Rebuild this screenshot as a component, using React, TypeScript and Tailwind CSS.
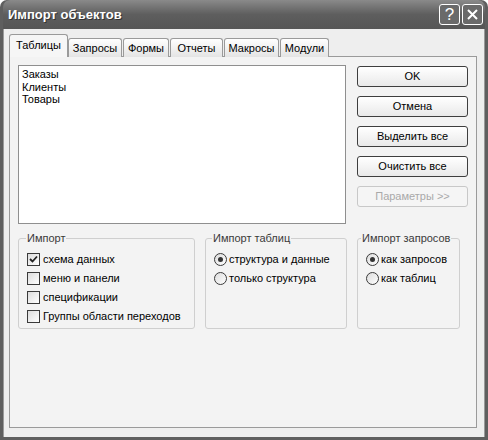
import React from "react";

const font = { fontFamily: '"Liberation Sans", Arial, sans-serif' };

function XpButton({ label, disabled }: { label: string; disabled?: boolean }) {
  return (
    <div
      className={`h-[21px] w-[111px] rounded-[3px] border flex items-center justify-center ${
        disabled
          ? "border-[#c8c8c8] bg-[#f5f5f5] text-[#a9a9a9]"
          : "border-[#3e3e3e] bg-gradient-to-b from-white to-[#e9e9e9] text-black"
      }`}
    >
      {label}
    </div>
  );
}

function Check({ label, checked }: { label: string; checked?: boolean }) {
  return (
    <div className="h-[19px] flex items-center gap-[3px] whitespace-nowrap">
      <div className="w-[13px] h-[13px] border border-[#3a3a3a] bg-gradient-to-br from-[#dcdcdc] to-white flex items-center justify-center">
        {checked && (
          <svg width="9" height="9" viewBox="0 0 9 9">
            <path d="M1 4 L3.5 6.5 L8 1.5" fill="none" stroke="#222" strokeWidth="1.8" />
          </svg>
        )}
      </div>
      <span>{label}</span>
    </div>
  );
}

function Radio({ label, checked }: { label: string; checked?: boolean }) {
  return (
    <div className="h-[19px] flex items-center gap-[2px] whitespace-nowrap">
      <div className="w-[13px] h-[13px] rounded-full border border-[#3a3a3a] bg-gradient-to-br from-[#dcdcdc] to-white flex items-center justify-center">
        {checked && <div className="w-[5px] h-[5px] rounded-full bg-[#333]" />}
      </div>
      <span>{label}</span>
    </div>
  );
}

function Group({ title, width, legend, children }: { title: string; width: string; legend: string; children: React.ReactNode }) {
  return (
    <fieldset className={`${width} h-[99px] border border-[#cfcfcf] rounded-[3px] pl-[8px] pt-[3px]`}>
      <legend className={`${legend} px-[1px] text-[#3a3a3a] whitespace-nowrap`}>{title}</legend>
      {children}
    </fieldset>
  );
}

const tabs = [
  { label: "Запросы", w: "w-[54px]" },
  { label: "Формы", w: "w-[46px]" },
  { label: "Отчеты", w: "w-[53px]" },
  { label: "Макросы", w: "w-[55px]" },
  { label: "Модули", w: "w-[49px]" },
];

export default function App() {
  return (
    <div className="w-[488px] h-[440px] bg-white text-[11px] text-black" style={font}>
      <div className="w-full h-full rounded-t-[7px] bg-[#5f5f5f] flex flex-col px-[3px] pb-[3px]">
        <div className="h-[29px] shrink-0 flex items-center justify-between pl-[5px] pr-[2px] rounded-t-[7px] bg-gradient-to-b from-[#8a8a8a] via-[#5e5e5e] to-[#565656]">
          <span className="text-white font-bold text-[13px] [text-shadow:1px_1px_0_#333]">Импорт объектов</span>
          <div className="flex gap-[2px]">
            <div className="w-[21px] h-[21px] rounded-[3px] border border-white bg-[#6a6a6a] flex items-center justify-center text-white text-[17px]">
              ?
            </div>
            <div className="w-[21px] h-[21px] rounded-[3px] border border-white bg-[#6a6a6a] flex items-center justify-center">
              <svg width="13" height="13" viewBox="0 0 13 13">
                <path d="M2 2 L11 11 M11 2 L2 11" stroke="white" strokeWidth="2" />
              </svg>
            </div>
          </div>
        </div>
        <div className="flex-1 bg-[#eeeeee] border-x border-[#9a9a9a] pl-[5px] pt-[6px]">
          <div className="flex items-end h-[22px] relative z-10">
            <div className="w-[59px] h-[23px] border border-b-0 border-[#9a9a9a] rounded-t-[3px] bg-[#f6f6f6] flex items-center justify-center pb-[2px]">
              Таблицы
            </div>
            {tabs.map((t) => (
              <div
                key={t.label}
                className={`${t.w} h-[19px] mr-[1px] border border-b-0 border-[#9a9a9a] rounded-t-[3px] bg-gradient-to-b from-white to-[#e4e4e4] flex items-center justify-center`}
              >
                {t.label}
              </div>
            ))}
          </div>
          <div className="w-[468px] h-[372px] border border-[#9a9a9a] bg-[#f3f3f3] pt-[8px] px-[8px] -mt-[1px]">
            <div className="flex gap-[11px]">
              <div className="w-[328px] h-[159px] bg-white border border-[#8f8f8f] pl-[3px] pt-[2px] leading-[12.5px]">
                <div>Заказы</div>
                <div>Клиенты</div>
                <div>Товары</div>
              </div>
              <div className="flex flex-col gap-[9px] pt-[1px]">
                <XpButton label="OK" />
                <XpButton label="Отмена" />
                <XpButton label="Выделить все" />
                <XpButton label="Очистить все" />
                <XpButton label="Параметры >>" disabled />
              </div>
            </div>
            <div className="flex gap-[10px] mt-[6px]">
              <Group title="Импорт" width="w-[177px]" legend="-ml-[1px]">
                <Check label="схема данных" checked />
                <Check label="меню и панели" />
                <Check label="спецификации" />
                <Check label="Группы области переходов" />
              </Group>
              <Group title="Импорт таблиц" width="w-[142px]" legend="-ml-[2px]">
                <Radio label="структура и данные" checked />
                <Radio label="только структура" />
              </Group>
              <Group title="Импорт запросов" width="w-[103px]" legend="-ml-[5px]">
                <Radio label="как запросов" checked />
                <Radio label="как таблиц" />
              </Group>
            </div>
          </div>
        </div>
      </div>
    </div>
  );
}
